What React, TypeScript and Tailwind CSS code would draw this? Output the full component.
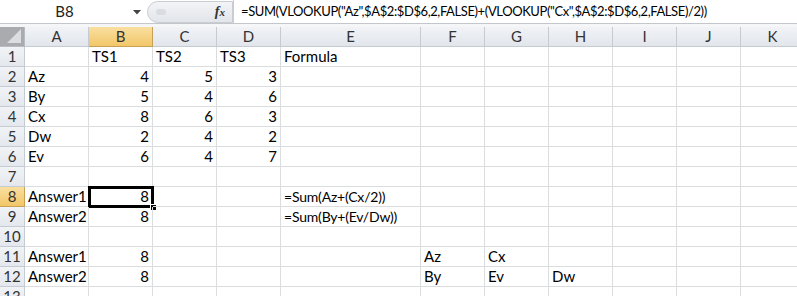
import React from 'react';

const cols = [
  { key: 'A', w: 64 },
  { key: 'B', w: 64 },
  { key: 'C', w: 64 },
  { key: 'D', w: 64 },
  { key: 'E', w: 140 },
  { key: 'F', w: 64 },
  { key: 'G', w: 64 },
  { key: 'H', w: 64 },
  { key: 'I', w: 64 },
  { key: 'J', w: 64 },
  { key: 'K', w: 64 },
];

type Cell = { v: string; num?: boolean; f?: boolean };

const data: Record<number, Record<string, Cell>> = {
  1: { B: { v: 'TS1' }, C: { v: 'TS2' }, D: { v: 'TS3' }, E: { v: 'Formula' } },
  2: { A: { v: 'Az' }, B: { v: '4', num: true }, C: { v: '5', num: true }, D: { v: '3', num: true } },
  3: { A: { v: 'By' }, B: { v: '5', num: true }, C: { v: '4', num: true }, D: { v: '6', num: true } },
  4: { A: { v: 'Cx' }, B: { v: '8', num: true }, C: { v: '6', num: true }, D: { v: '3', num: true } },
  5: { A: { v: 'Dw' }, B: { v: '2', num: true }, C: { v: '4', num: true }, D: { v: '2', num: true } },
  6: { A: { v: 'Ev' }, B: { v: '6', num: true }, C: { v: '4', num: true }, D: { v: '7', num: true } },
  8: { A: { v: 'Answer1' }, B: { v: '8', num: true }, E: { v: '=Sum(Az+(Cx/2))', f: true } },
  9: { A: { v: 'Answer2' }, B: { v: '8', num: true }, E: { v: '=Sum(By+(Ev/Dw))', f: true } },
  11: { A: { v: 'Answer1' }, B: { v: '8', num: true }, F: { v: 'Az' }, G: { v: 'Cx' } },
  12: { A: { v: 'Answer2' }, B: { v: '8', num: true }, F: { v: 'By' }, G: { v: 'Ev' }, H: { v: 'Dw' } },
};

const rows = [1, 2, 3, 4, 5, 6, 7, 8, 9, 10, 11, 12, 13];

const font = { fontFamily: 'Lato, "Liberation Sans", Arial, sans-serif' };

export default function App() {
  return (
    <div className="w-[797px] h-[296px] overflow-hidden bg-white text-[15px] text-black" style={font}>
      {/* formula bar */}
      <div className="flex h-[23px] items-center bg-white">
        <div className="relative flex h-full w-[147px] shrink-0 items-center justify-center pr-[18px]">
          <span className="text-[15px] text-[#222]">B8</span>
          <svg className="absolute right-[6px] top-[10px]" width="8" height="5" viewBox="0 0 8 5">
            <path d="M0 0 L8 0 L4 4.5 Z" fill="#444" />
          </svg>
        </div>
        <div className="flex h-[22px] w-[86px] shrink-0 items-center justify-between rounded-l-full border border-[#c9cdd3] bg-gradient-to-b from-[#f3f4f6] to-[#e2e5ea] pl-[8px] pr-[7px]">
          <span className="block h-[6px] w-[10px] rounded-full bg-[#d9dce1]" />
          <span className="italic font-bold text-[14px] text-[#333]" style={{ fontFamily: '"Liberation Serif", serif' }}>
            f<span className="text-[11px]">x</span>
          </span>
        </div>
        <div className="flex h-full min-w-0 flex-1 items-center overflow-hidden border-l border-[#c9cdd3] pl-[7px] text-[13px] tracking-[-0.4px] whitespace-nowrap">
          =SUM(VLOOKUP("Az",$A$2:$D$6,2,FALSE)+(VLOOKUP("Cx",$A$2:$D$6,2,FALSE)/2))
        </div>
      </div>
      <div className="h-[1px] bg-[#c3c6cb]" />
      <div className="h-[3px] bg-[#f5f6f8]" />

      {/* column headers */}
      <div className="flex h-[20px]">
        <div className="relative h-full w-[25px] shrink-0 border-r border-b border-[#b7bcc4] bg-[#a9abae]">
          <svg className="absolute right-[3px] bottom-[3px]" width="14" height="14" viewBox="0 0 14 14">
            <path d="M14 0 L14 14 L0 14 Z" fill="#dcdde0" />
          </svg>
        </div>
        {cols.map((c) => (
          <div
            key={c.key}
            className={
              c.key === 'B'
                ? 'flex h-full shrink-0 items-center justify-center border-r border-b border-[#c7a256] bg-gradient-to-b from-[#f9df9f] to-[#f2c767] text-[#333]'
                : 'flex h-full shrink-0 items-center justify-center border-r border-b border-[#c5cbd3] bg-gradient-to-b from-[#f1f3f6] to-[#e2e6ec] text-[#333]'
            }
            style={{ width: c.w }}
          >
            {c.key}
          </div>
        ))}
      </div>

      {/* rows */}
      {rows.map((r) => (
        <div key={r} className="flex h-[20px]">
          <div
            className={
              r === 8
                ? 'flex h-full w-[25px] shrink-0 items-center justify-center border-r border-b border-[#c7a256] bg-gradient-to-b from-[#f9df9f] to-[#f2c767] text-[#333]'
                : 'flex h-full w-[25px] shrink-0 items-center justify-center border-r border-b border-[#c5cbd3] bg-gradient-to-b from-[#f1f3f6] to-[#e4e8ee] text-[#333]'
            }
          >
            {r}
          </div>
          {cols.map((c) => {
            const cell = data[r]?.[c.key];
            const sel = r === 8 && c.key === 'B';
            return (
              <div
                key={c.key}
                className={
                  'relative flex h-full shrink-0 items-center whitespace-nowrap border-r border-b border-[#dadcdd] px-[3px] ' +
                  (cell?.num ? 'justify-end' : 'justify-start') +
                  (cell?.f ? ' text-[14px] tracking-[-0.2px]' : '')
                }
                style={{ width: c.w }}
              >
                {cell?.v}
                {sel && (
                  <>
                    <div className="pointer-events-none absolute left-[-1px] top-[-1px] right-[-2px] bottom-[-2px] border-[3px] border-black" />
                    <div className="absolute right-[-5px] bottom-[-5px] h-[7px] w-[7px] border border-white bg-black" />
                  </>
                )}
              </div>
            );
          })}
        </div>
      ))}
    </div>
  );
}
